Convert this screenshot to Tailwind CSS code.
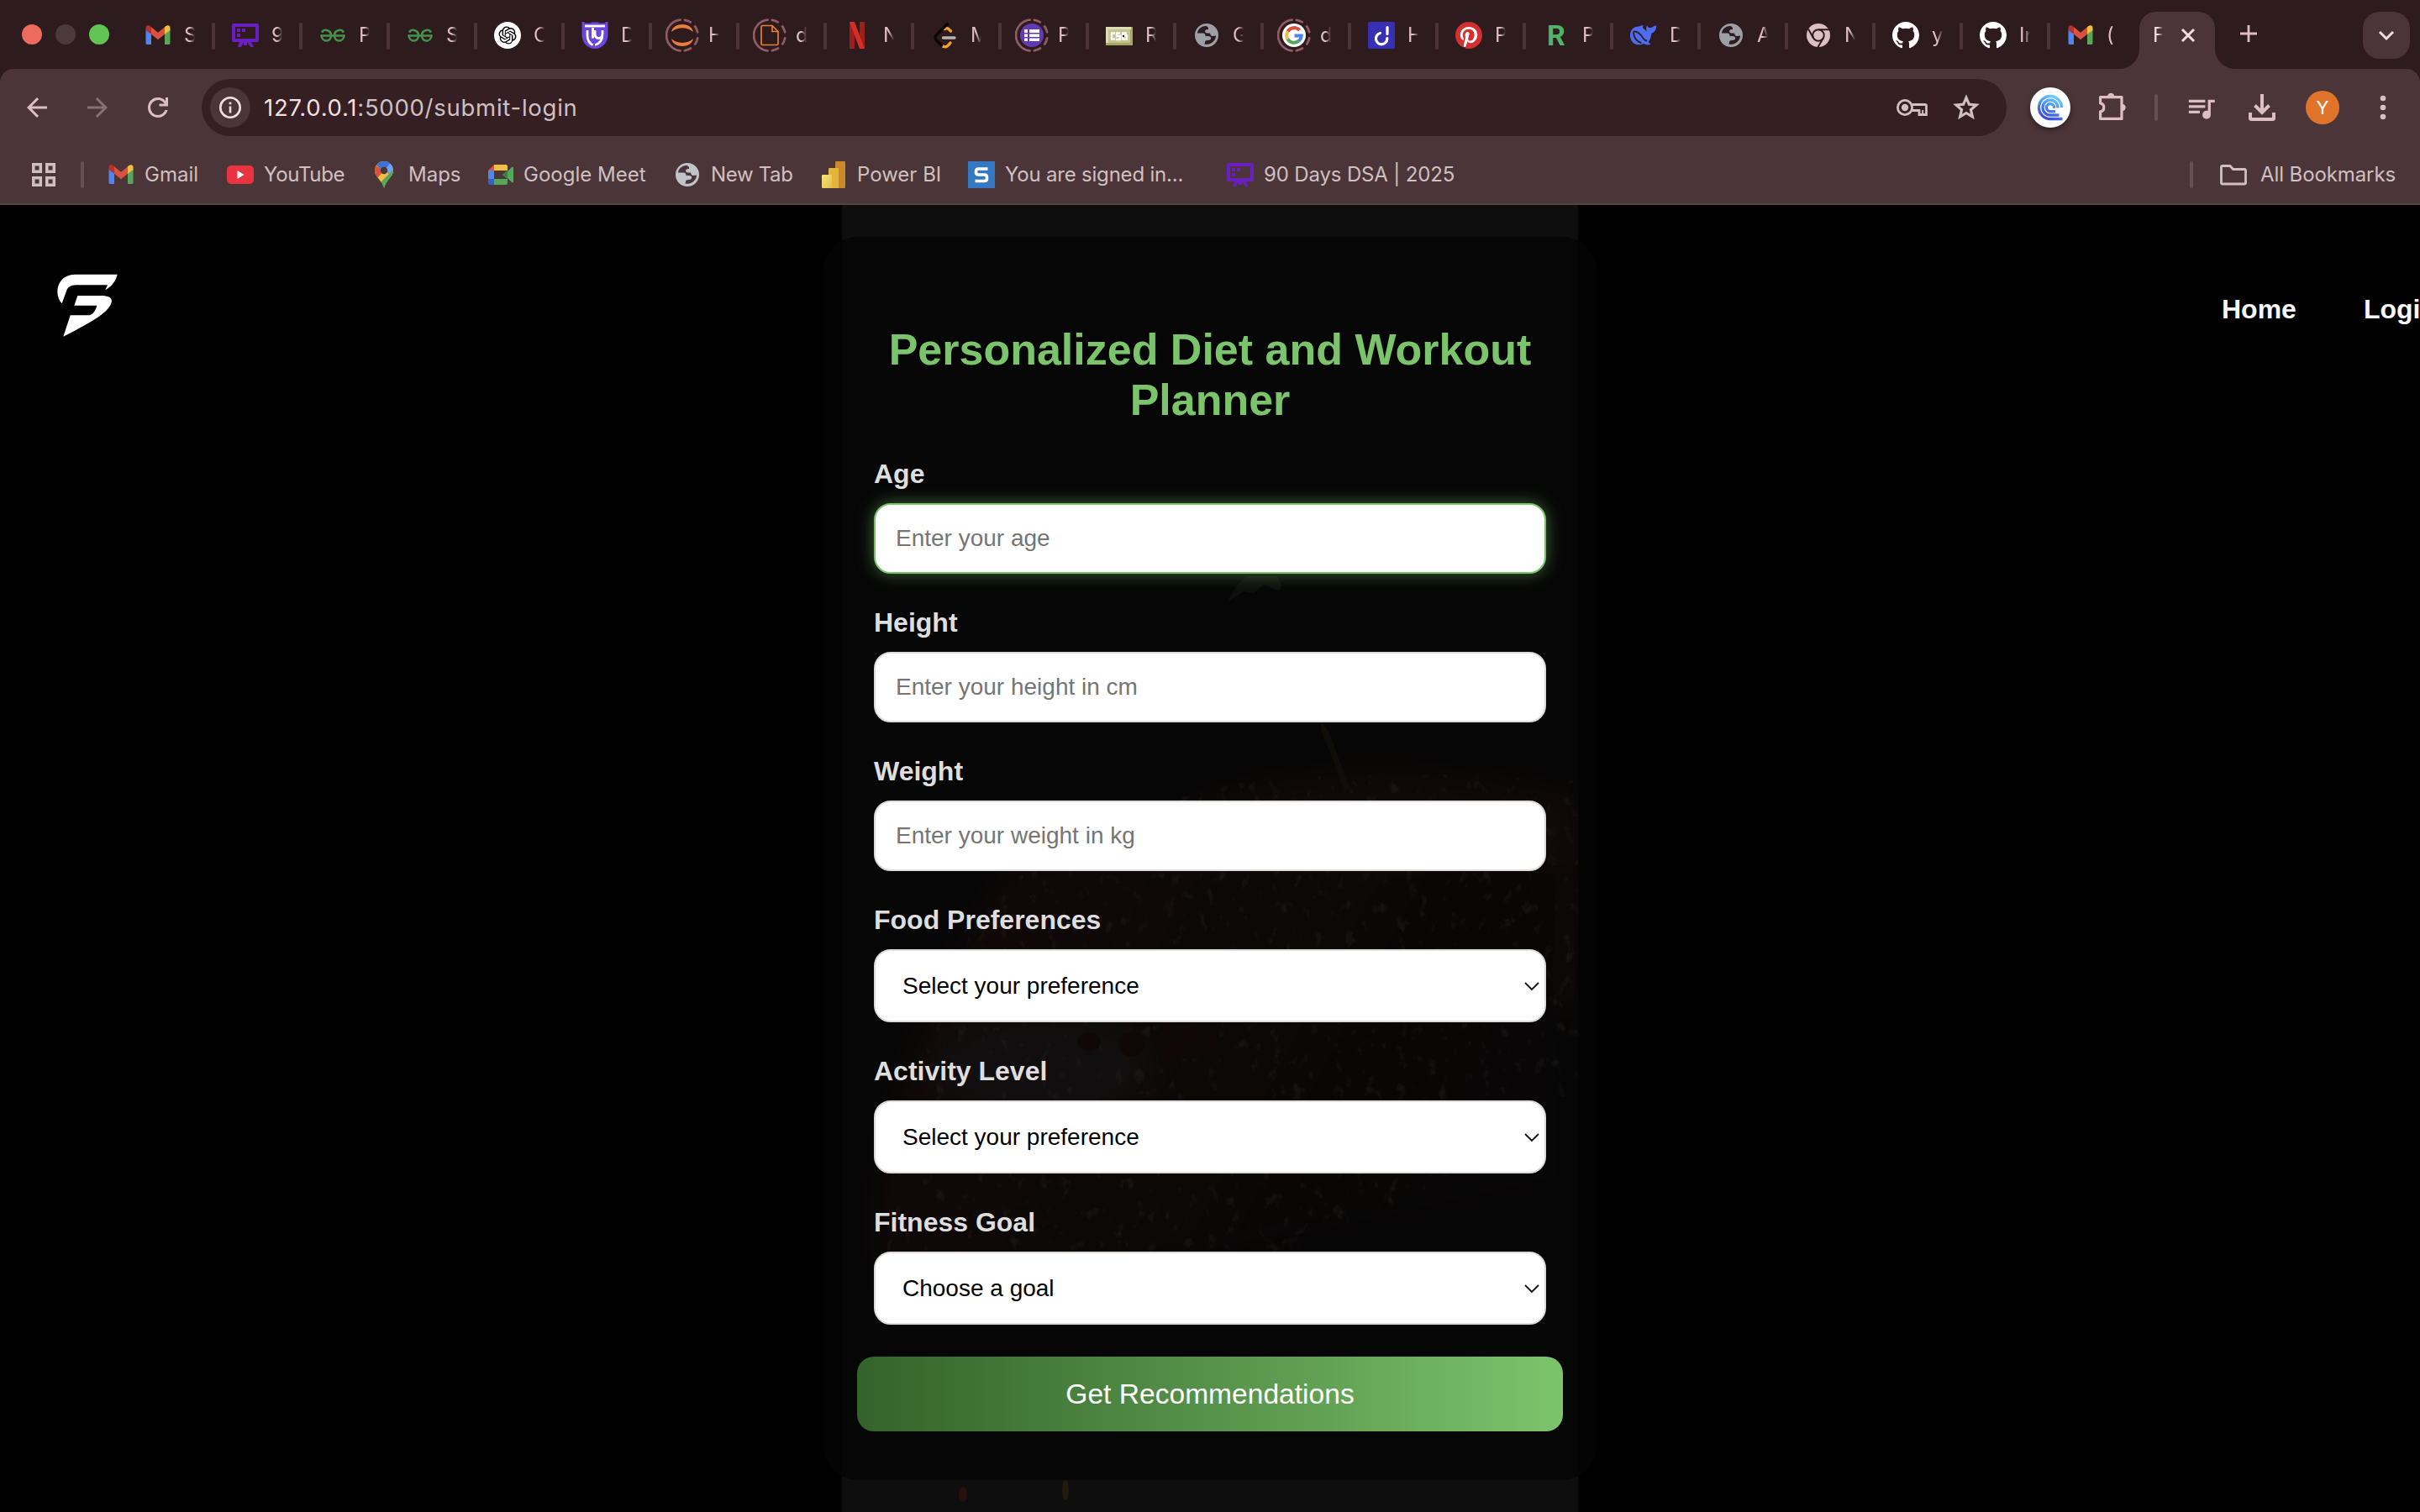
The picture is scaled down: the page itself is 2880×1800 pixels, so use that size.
<!DOCTYPE html>
<html lang="en">
<head>
<meta charset="utf-8">
<title>Personalized Diet and Workout Planner</title>
<script src="https://cdn.jsdelivr.net/npm/@tailwindcss/browser@4"></script>
</head>
<body class="w-[2880px] h-[1800px] overflow-hidden bg-black flex flex-col font-['Inter',sans-serif]">

<svg class="absolute size-0">
  <defs>
    <linearGradient id="swirl" gradientUnits="userSpaceOnUse" x1="26" y1="4" x2="14" y2="30"><stop offset="0" stop-color="#6fd0f8"/><stop offset=".45" stop-color="#4f98f2"/><stop offset="1" stop-color="#3a48e8"/></linearGradient>
    <linearGradient id="pbi" x1="0" y1="0" x2="1" y2="1"><stop offset="0" stop-color="#f7e37c"/><stop offset="1" stop-color="#e6bf45"/></linearGradient>
  </defs>
  <symbol id="gmail" viewBox="0 0 40 40">
    <g transform="translate(0 2.500) scale(1 .815)">
    <path fill="#4e86ee" d="M5.500 13v20a2 2.400 0 0 0 2 2H12V18z"/>
    <path fill="#58a55c" d="M34.500 13v20a2 2.400 0 0 1-2 2H28V18z"/>
    <path fill="#f2bd42" d="M28 9.500v10.500l6.500-6v-3.500c0-4-3.500-4.500-6.500-1z"/>
    <path fill="#b3332b" d="M12 9.500V20l-6.500-6v-3.500c0-4 3.500-4.500 6.500-1z"/>
    <path fill="#d9513f" d="M12 9.500l8 8 8-8V20l-8 8-8-8z"/>
    </g>
  </symbol>
  <symbol id="board" viewBox="0 0 40 40">
    <path fill="none" stroke="#6a1fc0" stroke-width="4" stroke-linejoin="round" d="M6 8h28v18H6z"/>
    <path fill="#6a1fc0" d="M10 12h4v4h-4zM16 12h4v4h-4zM10 18h4v4h-4zM13 28h5l-3 6h-4zM22 28h5l3 6h-4zM18 28h4v4h-4z"/>
  </symbol>
  <symbol id="gfg" viewBox="0 0 40 40">
    <path fill="none" stroke="#46924b" stroke-width="2.600" d="M7 16.500c1.500-2.500 4-3 6-2.500 3.500.8 5 3.500 5 6.300 0 4-2.500 6.200-5.500 6.200S6.800 24.300 6.500 20.500h27c-.3 3.800-3 6-6 6s-5.500-2.200-5.500-6.200c0-2.800 1.500-5.500 5-6.300 2-.5 4.500 0 6 2.500"/>
  </symbol>
  <symbol id="openai" viewBox="0 0 40 40">
    <circle cx="20" cy="20" r="16" fill="#fff"/>
    <path transform="translate(9.500 9.500) scale(.875)" d="M22.2819 9.8211a5.9847 5.9847 0 0 0-.5157-4.9108 6.0462 6.0462 0 0 0-6.5098-2.9A6.0651 6.0651 0 0 0 4.9807 4.1818a5.9847 5.9847 0 0 0-3.9977 2.9 6.0462 6.0462 0 0 0 .7427 7.0966 5.98 5.98 0 0 0 .511 4.9107 6.051 6.051 0 0 0 6.5146 2.9001A5.9847 5.9847 0 0 0 13.2599 24a6.0557 6.0557 0 0 0 5.7718-4.2058 5.9894 5.9894 0 0 0 3.9977-2.9001 6.0557 6.0557 0 0 0-.7475-7.0729zm-9.022 12.6081a4.4755 4.4755 0 0 1-2.8764-1.0408l.1419-.0804 4.7783-2.7582a.7948.7948 0 0 0 .3927-.6813v-6.7369l2.02 1.1686a.071.071 0 0 1 .038.052v5.5826a4.504 4.504 0 0 1-4.4945 4.4944zm-9.6607-4.1254a4.4708 4.4708 0 0 1-.5346-3.0137l.142.0852 4.783 2.7582a.7712.7712 0 0 0 .7806 0l5.8428-3.3685v2.3324a.0804.0804 0 0 1-.0332.0615L9.74 19.9502a4.4992 4.4992 0 0 1-6.1408-1.6464zM2.3408 7.8956a4.485 4.485 0 0 1 2.3655-1.9728V11.6a.7664.7664 0 0 0 .3879.6765l5.8144 3.3543-2.0201 1.1685a.0757.0757 0 0 1-.071 0l-4.8303-2.7865A4.504 4.504 0 0 1 2.3408 7.872zm16.5963 3.8558L13.1038 8.364 15.1192 7.2a.0757.0757 0 0 1 .071 0l4.8303 2.7913a4.4944 4.4944 0 0 1-.6765 8.1042v-5.6772a.79.79 0 0 0-.407-.667zm2.0107-3.0231l-.142-.0852-4.7735-2.7818a.7759.7759 0 0 0-.7854 0L9.409 9.2297V6.8974a.0662.0662 0 0 1 .0284-.0615l4.8303-2.7866a4.4992 4.4992 0 0 1 6.6802 4.66zM8.3065 12.863l-2.02-1.1638a.0804.0804 0 0 1-.038-.0567V6.0742a4.4992 4.4992 0 0 1 7.3757-3.4537l-.142.0805L8.704 5.459a.7948.7948 0 0 0-.3927.6813zm1.0976-2.3654l2.602-1.4998 2.6069 1.4998v2.9994l-2.5974 1.4997-2.6067-1.4997Z"/>
  </symbol>
  <symbol id="shield" viewBox="0 0 40 40">
    <path fill="#6b45dc" d="M4.500 4h3v1.500h8V4.500h9v1h8V4h3v15c0 10-7 17-15.500 17S4.500 29 4.500 19z"/>
    <g fill="none" stroke="#fff" stroke-width="2.800"><path d="M8 9h24"/><path d="M11 14v6c0 6 2 9.500 6.500 11.500M17.500 11v12.500"/><path d="M20 14v4c0 3.500 1.500 5.500 4.500 5.500S29 21.500 29 18v-4M29 18c0 7-3 12-9 13.500"/></g>
  </symbol>
  <symbol id="ring" viewBox="0 0 40 40">
    <g fill="none" stroke="#8f5c64" stroke-width="2.800" stroke-linecap="round"><path d="M17.500 1.700a18.400 18.400 0 0 0 0 36.600"/><path stroke-dasharray="7.500 7.300" d="M22.800 1.800a18.400 18.400 0 0 1 0 36.400"/></g>
  </symbol>
  <symbol id="jupyter" viewBox="0 0 40 40">
    <use href="#ring"/>
    <path fill="#ea7f3c" d="M7 16C9 4 31 4 33 16 26 9.500 14 9.500 7 16zM7 24c2 12 24 12 26 0-7 6.500-19 6.500-26 0z"/>
  </symbol>
  <symbol id="doc" viewBox="0 0 40 40">
    <use href="#ring"/>
    <path fill="none" stroke="#e8802f" stroke-width="1.700" d="M11.500 8.500H23l7 7V30a1.500 1.500 0 0 1-1.500 1.500h-17A1.500 1.500 0 0 1 10 30V10a1.500 1.500 0 0 1 1.500-1.500zM23 8.500V15.500h7"/>
  </symbol>
  <symbol id="netflix" viewBox="0 0 40 40">
    <path fill="#9e1f1b" d="M11 4h6v32h-6zM23 4h6v32h-6z"/><path fill="#d42f27" d="M11 4h6l12 32h-6z"/>
  </symbol>
  <symbol id="leet" viewBox="0 0 40 40">
    <g fill="none" stroke-linecap="round" stroke-width="3.400"><path stroke="#f0a236" d="M20 12.500c4-2 5 0 7.500 2.500M18 33c4 2 6 0 9-4"/><path stroke="#0a0707" d="M23.500 6.500L10.500 19.500c-2 2-2 4 0 6.500l6 6"/><path stroke="#b8b5b5" d="M18.500 23H32"/></g>
  </symbol>
  <symbol id="forms" viewBox="0 0 40 40">
    <use href="#ring"/><circle cx="20" cy="20" r="14" fill="#6139b3"/>
    <path fill="#fff" d="M11 13h4v4h-4zM17 13h12v4H17zM11 18.500h4v3.500h-4zM17 18.500h12v3.500H17zM11 23.500h4v3.500h-4zM17 23.500h12v3.500H17z"/>
  </symbol>
  <symbol id="card" viewBox="0 0 40 40">
    <path fill="#a7a765" d="M4 10h32v22H4z"/><path fill="#dcdcb6" d="M4 10h30v3H7v16H4z"/><path fill="#c3c48e" d="M7 13h26v16H7z"/>
    <path fill="none" stroke="#fff" stroke-width="2.300" d="M15 17.500h-4v7h4M21 17.500h-4v3.500h4v4h-5M29 17.500h-5v7h5v-4h-4"/><path fill="#222" d="M24 20h2v2h-2z"/>
  </symbol>
  <symbol id="globe" viewBox="0 0 40 40">
    <path fill="currentColor" fill-rule="evenodd" d="M20 6a14 14 0 1 0 0 28 14 14 0 0 0 0-28zM19 8.800C13 9.500 9.500 13 9 17.500L14.500 17.500C18 17.500 18.500 19 18.500 21L22 21C25.500 21 26 24 24 25.500L18.500 26.500 17.500 30.800C26 31.500 31 26 31 20.500L27 21C25 21 24.500 19 24 17.500L20 17.500C17.500 16.500 17.500 13.500 20 13.200L22 13C22.500 11 21 9.500 19 8.800Z"/>
  </symbol>
  <symbol id="google" viewBox="0 0 40 40">
    <use href="#ring"/><circle cx="20" cy="20" r="14" fill="#fff"/>
    <g fill="none" stroke-width="4"><path stroke="#d9513f" d="M12.500 15.500a8.700 8.700 0 0 1 14-1.500"/><path stroke="#f2bd42" d="M12.600 24.700a8.700 8.700 0 0 1 0-9.400"/><path stroke="#58a55c" d="M25.800 26.500a8.700 8.700 0 0 1-13.400-2"/><path stroke="#4e86ee" d="M20.500 20.500H28.700a8.700 8.700 0 0 1-3 6.200"/></g>
  </symbol>
  <symbol id="dash" viewBox="0 0 40 40">
    <rect x="4" y="4" width="32" height="32" rx="2" fill="#3830b2"/>
    <g fill="none" stroke="#fff" stroke-width="3.200" stroke-linecap="round"><path d="M18.500 17.500a6.700 6.700 0 1 0 8.300 6M27 10.500v8"/></g>
  </symbol>
  <symbol id="pin" viewBox="0 0 40 40">
    <circle cx="20" cy="20" r="15" fill="#fff"/>
    <path fill="#d3302f" transform="translate(4 4) scale(1.333)" d="M12.017 0C5.396 0 .029 5.367.029 11.987c0 5.079 3.158 9.417 7.618 11.162-.105-.949-.199-2.403.041-3.439.219-.937 1.406-5.957 1.406-5.957s-.359-.72-.359-1.781c0-1.663.967-2.911 2.168-2.911 1.024 0 1.518.769 1.518 1.688 0 1.029-.653 2.567-.992 3.992-.285 1.193.6 2.165 1.775 2.165 2.128 0 3.768-2.245 3.768-5.487 0-2.861-2.063-4.869-5.008-4.869-3.41 0-5.409 2.562-5.409 5.199 0 1.033.394 2.143.889 2.741.099.12.112.225.085.345-.09.375-.293 1.199-.334 1.363-.053.225-.172.271-.401.165-1.495-.69-2.433-2.878-2.433-4.646 0-3.776 2.748-7.252 7.92-7.252 4.158 0 7.392 2.967 7.392 6.923 0 4.135-2.607 7.462-6.233 7.462-1.214 0-2.354-.629-2.758-1.379l-.749 2.848c-.269 1.045-1.004 2.352-1.498 3.146 1.123.345 2.306.535 3.55.535 6.607 0 11.985-5.365 11.985-11.987C23.97 5.39 18.592.026 11.985.026L12.017 0z"/>
  </symbol>
  <symbol id="whale" viewBox="0 0 40 40">
    <path fill="#4f6bf0" d="M4 20c0-6.500 4.500-10.500 10-10.500 2 0 3-1.500 5.500-1.500l-.5 3.500c2 1 3.500 2.500 4.500 4.500-.5-3-.5-5.500.5-8 1 2.500 2.500 3.500 4.500 3 2.500-.5 4-2.500 7-2.500-.5 5-2.500 8-6 9-.5 4-1.500 7.500-4 10.500l3 2.500c-3 1.500-5.500 1-8-.5C11 34 4 28.500 4 20z"/>
    <path fill="none" stroke="#2e1b1e" stroke-width="1.800" d="M8 15.500c5-.5 9 4 11.500 8 1.500 2 3 3 4.500 3M8 16c0 6 3.500 11 9.500 13.500"/>
  </symbol>
  <symbol id="chrome" viewBox="0 0 40 40">
    <circle cx="20" cy="20" r="14" fill="#ddbfc3"/><circle cx="20" cy="20" r="6.800" fill="none" stroke="#2e1b1e" stroke-width="2"/>
    <path stroke="#2e1b1e" stroke-width="2" d="M20 13.200h13M14.200 23.500L8 12.500M25.800 23.500L19.500 34"/>
  </symbol>
  <symbol id="github" viewBox="0 0 40 40">
    <path fill="#fff" transform="translate(4 4) scale(2)" d="M8 0C3.580 0 0 3.580 0 8c0 3.540 2.290 6.530 5.470 7.590.4.070.55-.17.55-.38 0-.19-.01-.82-.01-1.490-2.010.37-2.530-.49-2.690-.94-.09-.23-.48-.94-.82-1.130-.28-.15-.68-.52-.01-.53.63-.01 1.080.58 1.230.82.72 1.210 1.870.87 2.330.66.070-.52.280-.87.510-1.070-1.780-.2-3.640-.89-3.640-3.950 0-.87.310-1.590.82-2.150-.08-.2-.36-1.020.080-2.120 0 0 .67-.21 2.200.82.64-.18 1.320-.27 2-.27s1.360.09 2 .27c1.530-1.040 2.200-.82 2.200-.82.44 1.100.16 1.920.080 2.120.51.56.82 1.270.82 2.150 0 3.070-1.870 3.750-3.650 3.950.29.25.54.73.54 1.480 0 1.070-.01 1.930-.01 2.200 0 .21.15.46.55.38A8.013 8.013 0 0 0 16 8c0-4.420-3.580-8-8-8z"/>
  </symbol>
</svg>

<!-- tab strip -->
<div class="h-[82px] shrink-0 bg-[#2e1b1e] flex items-start text-2xl text-[#ddbfc3]">
  <div class="h-[82px] w-[152px] shrink-0 flex items-center gap-4 pl-[26px]">
    <i class="size-6 rounded-full bg-[#ed6a5f]"></i><i class="size-6 rounded-full bg-[#4b393b]"></i><i class="size-6 rounded-full bg-[#61c454]"></i>
  </div>
  <div id="tabs" class="flex h-[84px]"></div>
  <div class="relative ml-0.5 mt-3.5 h-[68px] w-[90px] shrink-0 rounded-t-[20px] bg-[#4b3538] text-[#f1dfe0] flex items-center pl-4 pb-[12px]">
    <span class="absolute bottom-0 -left-6 size-6 bg-[radial-gradient(circle_at_0_0,transparent_23.5px,#4b3538_24.5px)]"></span>
    <span class="absolute bottom-0 -right-6 size-6 bg-[radial-gradient(circle_at_100%_0,transparent_23.5px,#4b3538_24.5px)]"></span>
    <span class="w-3 overflow-hidden [mask-image:linear-gradient(to_right,black_50%,transparent)]">F</span>
    <svg class="ml-[18px] size-6" viewBox="0 0 24 24" fill="none" stroke="currentColor" stroke-width="3"><path d="M5 5l14 14M19 5L5 19"/></svg>
  </div>
  <svg class="ml-[26px] mt-[26px] size-7 shrink-0" viewBox="0 0 28 28" fill="none" stroke="#ddbfc3" stroke-width="2.800"><path d="M14 4v20M4 14h20"/></svg>
  <div class="ml-auto mr-3 mt-3.5 h-14 w-14 rounded-[20px] bg-[#4b3538] flex items-center justify-center">
    <svg class="size-6" viewBox="0 0 24 24" fill="none" stroke="#f1dfe0" stroke-width="3"><path d="M4 8l8 8 8-8"/></svg>
  </div>
</div>

<!-- toolbar and bookmarks -->
<div class="bg-[#2e1b1e] shrink-0">
<div class="bg-[#4b3538] rounded-t-2xl h-[162px] border-b-2 border-[#524649]">
  <div class="h-[92px] flex items-center pl-[26px] text-[#ddbfc3]">
    <div class="flex gap-9">
      <svg class="size-9" viewBox="0 0 24 24" fill="currentColor"><path d="M20 11H7.830l5.590-5.590L12 4l-8 8 8 8 1.410-1.410L7.830 13H20v-2z"/></svg>
      <svg class="size-9 text-[#8a7073]" viewBox="0 0 24 24" fill="currentColor"><path d="M4 11h12.170l-5.590-5.590L12 4l8 8-8 8-1.410-1.410L16.170 13H4v-2z"/></svg>
      <svg class="size-9" viewBox="0 0 24 24" fill="currentColor"><path d="M12 20q-3.350 0-5.675-2.325Q4 15.350 4 12q0-3.350 2.325-5.675Q8.650 4 12 4q1.725 0 3.300.713Q16.875 5.425 18 6.750V4h2v7h-7V9h4.200q-.8-1.400-2.188-2.200Q13.625 6 12 6 9.500 6 7.750 7.750T6 12q0 2.500 1.750 4.250T12 18q1.925 0 3.475-1.100T17.650 14h2.100q-.7 2.650-2.850 4.325Q14.750 20 12 20Z"/></svg>
    </div>
    <div class="ml-[34px] h-[68px] w-[2148px] rounded-full bg-[#351f22] flex items-center pl-2.5 pr-[29px] text-[#cfc0c1]">
      <div class="size-12 rounded-full bg-[#4b3538] flex items-center justify-center">
        <svg class="size-7" viewBox="0 0 28 28" fill="none" stroke="#f1dfe0" stroke-width="2.600"><circle cx="14" cy="14" r="11.700"/><path d="M14 12.500v8M14 7.500v2.800"/></svg>
      </div>
      <span class="ml-4 pt-px text-[27.5px] tracking-[0.74px]"><span class="text-[#f1dfe0]">127.0.0.1</span>:5000/submit-login</span>
      <svg class="ml-auto h-6 w-10" viewBox="0 0 40 24" fill="none" stroke="currentColor" stroke-width="2.800"><path d="M20.500 8.500H36q1.500 0 1.500 1.500v10.500h-8.500v-5h-8.500"/><circle cx="12" cy="12" r="8.600"/><circle cx="12" cy="12" r="4.200" fill="currentColor" stroke="none"/><path stroke-width="2" d="M33.200 15v5"/></svg>
      <svg class="ml-[26px] size-[38px]" viewBox="0 0 24 24" fill="currentColor"><path d="M8.850 16.825 12 14.925l3.150 1.925-.825-3.600 2.775-2.400-3.650-.325L12 7.125l-1.450 3.375-3.650.325 2.775 2.425ZM5.825 21l1.625-7.025L2 9.250l7.200-.625L12 2l2.800 6.625 7.200.625-5.450 4.725L18.175 21 12 17.275Z"/></svg>
    </div>
    <div class="ml-7 size-12 rounded-full bg-white shadow-[0_3px_6px_rgba(0,0,0,.4)] flex items-center justify-center">
      <svg class="size-8" viewBox="0 0 32 32" fill="none" stroke="url(#swirl)" stroke-width="3.300"><path d="M29.500 16A13.500 13.500 0 1 0 16 29.500H30.500M25 16.500A9 9 0 1 0 16 25H26.500M20.600 17A4.600 4.600 0 1 0 16 20.700H22"/></svg>
    </div>
    <svg class="ml-[30px] size-10" viewBox="0 0 40 40" fill="none" stroke="currentColor" stroke-width="3.200" stroke-linejoin="round"><path d="M5.600 7.600H31v25.800H5.600v-8.500c5.500-1 5.500-9 0-10z"/><path fill="currentColor" stroke="none" d="M14 7a4.200 4.200 0 0 1 8.400 0zM31.500 15.800a4.200 4.200 0 0 1 0 8.400z"/></svg>
    <i class="ml-[30px] h-8 w-1 rounded-full bg-[#665053]"></i>
    <svg class="ml-8 size-[39px]" viewBox="0 0 24 24" fill="currentColor"><path d="M15 6H3v2h12V6zm0 4H3v2h12v-2zM3 16h8v-2H3v2zM17 6v8.180c-.31-.11-.65-.18-1-.18-1.660 0-3 1.340-3 3s1.340 3 3 3 3-1.340 3-3V8h3V6h-5z"/></svg>
    <svg class="ml-[33px] size-10" viewBox="0 0 40 40" fill="none" stroke="currentColor" stroke-width="4"><path d="M20 4v21M11.500 17.500L20 26l8.500-8.500M6 26v6.500q0 1.500 1.500 1.500h25q1.500 0 1.500-1.500V26"/></svg>
    <div class="ml-8 size-10 rounded-full bg-[#e0742b] text-white text-[22px] flex items-center justify-center">Y</div>
    <svg class="ml-12 h-10 w-2" viewBox="0 0 8 40" fill="currentColor"><circle cx="4" cy="9" r="3.300"/><circle cx="4" cy="20" r="3.300"/><circle cx="4" cy="31" r="3.300"/></svg>
  </div>
  <div class="h-[68px] flex items-center pl-9 pr-[30px] text-2xl text-[#cfc0c1] whitespace-nowrap">
    <svg class="size-8" viewBox="0 0 32 32" fill="none" stroke="currentColor" stroke-width="3.500"><path d="M3.800 3.800h8.500v8.500H3.800zM19.800 3.800h8.500v8.500h-8.500zM3.800 19.800h8.500v8.500H3.800zM19.800 19.800h8.500v8.500h-8.500z"/></svg>
    <i class="ml-7 mr-7 h-8 w-1 rounded-full bg-[#665053]"></i>
    <div class="w-[142px] flex items-center gap-3"><svg class="size-8" viewBox="4 4 32 32"><use href="#gmail" width="40" height="40"/></svg><span>Gmail</span></div>
    <div class="w-[171px] flex items-center gap-3"><svg class="size-8" viewBox="0 0 32 32"><rect y="5" width="32" height="22" rx="5" fill="#ea3340"/><path fill="#fff" d="M12.500 11l8 5-8 5z"/></svg><span class="tracking-[-0.3px]">YouTube</span></div>
    <div class="w-[138px] flex items-center gap-3"><svg class="size-8" viewBox="0 0 32 32"><clipPath id="pinclip"><path d="M16 0a11 11 0 0 0-11 11c0 6 4 8 7 13 2 3 3 5 4 8 1-3 2-5 4-8 3-5 7-7 7-13A11 11 0 0 0 16 0z"/></clipPath><g clip-path="url(#pinclip)"><path fill="#58a55c" d="M0 0h32v32H0z"/><path fill="#f2bd42" d="M0 22L22 0-4 0v28z"/><path fill="#f2bd42" d="M4 22L16 11l6 4-12 12z"/><path fill="#d9513f" d="M4 4l12 7-8 9-6-4z"/><path fill="#3f72d8" d="M6 4L14-2h14l-2 3-10 11z"/><path fill="#6da2f5" d="M18 9L25 0l6 12-8 4z"/><path fill="#58a55c" d="M27 10L9 30l8 4 14-12V8z"/></g><circle cx="16" cy="11" r="4.200" fill="#4b3538"/></svg><span class="pl-px">Maps</span></div>
    <div class="w-[223px] flex items-center gap-3"><svg class="size-8" viewBox="0 0 32 32"><path fill="#d9513f" d="M2 11l7-7v7z"/><path fill="#f2bd42" d="M9 4h14q2 0 2 2v5H9z"/><path fill="#4e86ee" d="M2 11h7v10H2z"/><path fill="#3560c8" d="M2 21h7v7H4q-2 0-2-2z"/><path fill="#58a55c" d="M9 21h16v5q0 2-2 2H9zM25 12l5-5q2-1 2 1v16q0 2-2 1l-5-5z"/><path fill="#3c8143" d="M18.500 16l6.500-5.500v11z"/></svg><span>Google Meet</span></div>
    <div class="w-[174px] flex items-center gap-3"><svg class="size-8 text-[#bfc4c9]" viewBox="4 4 32 32"><use href="#globe" width="40" height="40"/></svg><span class="tracking-[-0.35px]">New Tab</span></div>
    <div class="w-[176px] flex items-center gap-3"><svg class="size-8" viewBox="0 0 32 32"><rect x="18" width="12" height="32" rx="1" fill="#c98a2b"/><rect x="10" y="8" width="12" height="24" rx="1" fill="#e3b53c"/><rect x="2" y="16" width="12" height="16" rx="1" fill="url(#pbi)"/></svg><span>Power BI</span></div>
    <div class="w-[308px] flex items-center gap-3"><svg class="size-8" viewBox="0 0 32 32"><path fill="#3478c2" d="M0 0h32v32H0z"/><path fill="none" stroke="#fff" stroke-width="3.600" d="M23.500 9H12.500q-3 0-3 3v1q0 3 3 3h7q3 0 3 3v1.500q0 3-3 3H8.500"/></svg><span class="tracking-[-0.2px]">You are signed in...</span></div>
    <div class="flex items-center gap-3"><svg class="size-8" viewBox="4 4 32 32"><use href="#board" width="40" height="40"/></svg><span class="tracking-[-0.15px]">90 Days DSA | 2025</span></div>
    <i class="ml-auto h-8 w-1 rounded-full bg-[#665053]"></i>
    <svg class="ml-8 mr-4 size-8" viewBox="0 0 32 32" fill="none" stroke="currentColor" stroke-width="2.800" stroke-linejoin="round"><path d="M1.500 7q0-1.500 1.500-1.500h9l3.500 4H29q1.500 0 1.500 1.500v14.500q0 1.500-1.500 1.500H3q-1.500 0-1.500-1.500z"/></svg>
    <span class="w-[160px] tracking-[-0.1px]">All Bookmarks</span>
  </div>
</div>
</div>

<!-- page -->
<main class="grid h-[1556px] overflow-hidden font-['Liberation_Sans',Arial,sans-serif]">
  <svg class="[grid-area:1/1] justify-self-center w-[876px] h-[1556px] bg-[#0e0e0e]" viewBox="1002 244 876 1556">
    <defs>
      <filter id="soft" x="-20%" y="-20%" width="140%" height="140%"><feGaussianBlur stdDeviation="16"/></filter>
      <filter id="seeds" x="0" y="0" width="100%" height="100%"><feTurbulence type="fractalNoise" baseFrequency="0.080 0.055" numOctaves="4" seed="8"/><feColorMatrix values="0 0 0 0 .5  0 0 0 0 .40  0 0 0 0 .34  5 0 0 0 -3.100"/><feComposite in2="SourceAlpha" operator="in"/></filter>
      <linearGradient id="berry" x1="0" y1="0" x2="1" y2=".35"><stop offset="0" stop-color="#4e1c18"/><stop offset=".45" stop-color="#2e1512"/><stop offset="1" stop-color="#160e0d"/></linearGradient>
    </defs>
    <g filter="url(#soft)">
      <path fill="#3a1a17" d="M1420 960Q1600 890 1878 950V1200H1300z"/>
      <path fill="url(#berry)" d="M1200 1040Q1400 1000 1860 1030L1850 1400Q1600 1460 1300 1520L1060 1560Q1010 1400 1130 1150z"/>
      <ellipse cx="1240" cy="1270" rx="130" ry="70" fill="#3c3532"/>
    </g>
    <path filter="url(#seeds)" opacity=".35" d="M1420 940Q1600 910 1878 930V1300Q1600 1500 1300 1560L1060 1560Q1010 1400 1180 1060z"/>
    <path fill="#3a372c" d="M1462 716q10-24 24-30h34q8 12 2 18l-18-8-12 10-12-2z"/>
    <path fill="#33301a" d="M1572 860q12 10 16 30l18 48-6 4-18-50q-10-16-10-32z"/>
    <g fill="#3d140e"><ellipse cx="1296" cy="1240" rx="14" ry="11"/><ellipse cx="1347" cy="1243" rx="16" ry="15"/><ellipse cx="1412" cy="1240" rx="36" ry="20"/></g>
    <ellipse cx="1146" cy="1779" rx="5" ry="9" fill="#2a100a"/><ellipse cx="1268" cy="1774" rx="4" ry="12" fill="#241a0c"/>
  </svg>

  <section class="[grid-area:1/1] justify-self-center mt-[38px] h-[1480px] w-[920px] rounded-[40px] bg-[#050505]/80 px-10 pt-[104px]">
    <h1 class="text-center text-[52px] leading-[60px] font-bold text-[#7cc46c]">Personalized Diet and Workout<br>Planner</h1>
    <form class="mt-10 flex flex-col text-[32px] leading-9 font-bold text-[#dedede]">
      <div class="px-5 flex flex-col gap-10">
        <label class="flex flex-col items-start gap-[17px]"><span>Age</span>
          <span class="h-[84px] w-full rounded-[20px] border-2 border-[#7cc46c] bg-white shadow-[0_0_20px_rgba(124,196,108,.5)] flex items-center px-6 text-[28px] font-normal text-[#757575]">Enter your age</span></label>
        <label class="flex flex-col items-start gap-[17px]"><span>Height</span>
          <span class="h-[84px] w-full rounded-[20px] border-2 border-[#ddd] bg-white flex items-center px-6 text-[28px] font-normal text-[#757575]">Enter your height in cm</span></label>
        <label class="flex flex-col items-start gap-[17px]"><span>Weight</span>
          <span class="h-[84px] w-full rounded-[20px] border-2 border-[#ddd] bg-white flex items-center px-6 text-[28px] font-normal text-[#757575]">Enter your weight in kg</span></label>
        <label class="flex flex-col items-start gap-[17px]"><span>Food Preferences</span>
          <span class="h-[87px] w-full rounded-[20px] border-2 border-[#ddd] bg-white flex items-center justify-between pl-8 pr-[5px] text-[28px] font-normal text-black"><span>Select your preference</span><svg class="size-5" viewBox="0 0 20 20" fill="none" stroke="#111" stroke-width="1.800"><path d="M2 6l8 8 8-8"/></svg></span></label>
        <label class="flex flex-col items-start gap-[17px]"><span>Activity Level</span>
          <span class="h-[87px] w-full rounded-[20px] border-2 border-[#ddd] bg-white flex items-center justify-between pl-8 pr-[5px] text-[28px] font-normal text-black"><span>Select your preference</span><svg class="size-5" viewBox="0 0 20 20" fill="none" stroke="#111" stroke-width="1.800"><path d="M2 6l8 8 8-8"/></svg></span></label>
        <label class="flex flex-col items-start gap-[17px]"><span>Fitness Goal</span>
          <span class="h-[87px] w-full rounded-[20px] border-2 border-[#ddd] bg-white flex items-center justify-between pl-8 pr-[5px] text-[28px] font-normal text-black"><span>Choose a goal</span><svg class="size-5" viewBox="0 0 20 20" fill="none" stroke="#111" stroke-width="1.800"><path d="M2 6l8 8 8-8"/></svg></span></label>
      </div>
      <button type="button" class="mt-[38px] h-[89px] rounded-[20px] bg-linear-to-r from-[#33632a] to-[#7cc46c] text-[33.6px] font-normal text-white">Get Recommendations</button>
    </form>
  </section>

  <nav class="[grid-area:1/1] h-[248px] w-[2880px] flex items-center justify-between pl-[68px] overflow-hidden">
    <svg class="mb-2.5 h-[75px] w-[72px]" viewBox="204 260 216 223" fill="#fff"><path d="M270 261H419C414 283 400 303 376 317L384 299H272C252 299 242 308 238 318L221 365C200 343 198 300 226 275Q242 261 270 261zM277 337H360C395 337 404 348 396 366C386 392 350 420 226 483L251 407H312C332 407 340 392 346 372H265z"/></svg>
    <div class="w-[236px] shrink-0 flex gap-20 text-[32px] font-bold text-[#f8f6f6] whitespace-nowrap"><span>Home</span><span>Login</span></div>
  </nav>
</main>

<script>
  const tabs = [['gmail','S'],['board','9'],['gfg','P'],['gfg','S'],['openai','C'],['shield','D'],['jupyter','H'],['doc','d'],['netflix','N'],['leet','M'],['forms','P'],['card','R'],['globe','G'],['google','d'],['dash','H'],['pin','P'],['','P'],['whale','D'],['globe','A'],['chrome','N'],['github','y'],['github','In'],['gmail','(']];
  document.getElementById('tabs').innerHTML = tabs.map(([icon, t], i) =>
    `<div class="w-[104px] shrink-0 flex items-center pl-4">
      ${icon ? `<svg class="size-10 text-[#9aa0a6]"><use href="#${icon}"/></svg>` : `<b class="size-10 text-center text-[34px] leading-10 text-[#4fb368] font-['Roboto',sans-serif]">R</b>`}
      <span class="ml-[11px] w-[13px] overflow-hidden [mask-image:linear-gradient(to_right,black_50%,transparent)]">${t}</span>
      ${i < 22 ? '<i class="ml-auto mt-0.5 h-8 w-1 rounded-full bg-[#4b3538]"></i>' : ''}
    </div>`).join('');
</script>
</body>
</html>
